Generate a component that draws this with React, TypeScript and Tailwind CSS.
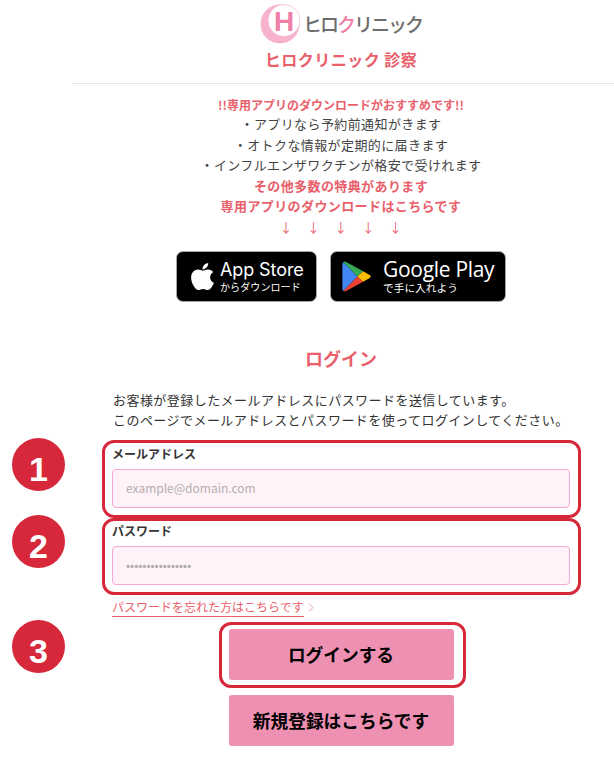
import { FaApple } from "react-icons/fa";

const font = { fontFamily: '"Noto Sans CJK JP", "Noto Sans", sans-serif' };

function Logo() {
  return (
    <div className="flex h-[47px] items-center justify-center">
      <svg width="40" height="40" viewBox="0 0 40 40">
        <circle cx="20" cy="20" r="19.5" fill="#f7b3cd" />
        <circle cx="24" cy="16.5" r="16" fill="#fff" stroke="#f7b3cd" strokeWidth="0.7" />
        <text x="24" y="27" textAnchor="middle" fontSize="28" fontWeight="700" fill="#ee7fa8" style={{ fontFamily: '"Liberation Sans", sans-serif' }}>H</text>
      </svg>
      <span className="ml-[3px] text-[19px] font-medium leading-none tracking-[-2px] text-[#6e6e6e]">
        ヒロ<span className="text-[#ef7fa8]">ク</span>リニック
      </span>
    </div>
  );
}

function GooglePlayIcon() {
  return (
    <svg width="30" height="33" viewBox="0 0 31 35">
      <path d="M1 2 L16 17.5 L1 33 Q0 32 0 30 L0 5 Q0 3 1 2Z" fill="#4285f4" />
      <path d="M1 2 Q2 1 4 2 L22 12 L16 17.5Z" fill="#34a853" />
      <path d="M1 33 Q2 34 4 33 L22 23 L16 17.5Z" fill="#ea4335" />
      <path d="M22 12 L29 16 Q31 17.5 29 19 L22 23 L16 17.5Z" fill="#fbbc04" />
    </svg>
  );
}

function Badges() {
  return (
    <div className="mt-[13px] flex justify-center gap-[13px]">
      <div className="flex h-[51px] w-[141px] items-center rounded-[7px] border border-[#a6a6a6] bg-black pl-[10px] text-white">
        <FaApple className="text-[31px]" />
        <div className="ml-[2px] flex flex-col">
          <span className="text-[18px] leading-[21px] tracking-[-0.1px]" style={{ fontFamily: '"Inter", sans-serif' }}>App Store</span>
          <span className="text-[10px] leading-[14px] tracking-[0.1px]">からダウンロード</span>
        </div>
      </div>
      <div className="flex h-[51px] w-[176px] items-center rounded-[7px] border border-[#a6a6a6] bg-black pl-[11px] text-white">
        <GooglePlayIcon />
        <div className="ml-[11px] flex flex-col">
          <span className="text-[21px] font-medium leading-[23px] tracking-[-0.3px]" style={{ fontFamily: '"Open Sans", sans-serif' }}>Google Play</span>
          <span className="text-[10.7px] leading-[14px]">で手に入れよう</span>
        </div>
      </div>
    </div>
  );
}

function Field({ label, placeholder }: { label: string; placeholder: string }) {
  return (
    <div className="flex flex-col">
      <label className="text-[12px] font-bold leading-[18px] text-[#333]">{label}</label>
      <div className="mt-[6px] flex h-[39px] items-center rounded-[4px] border border-[#f8a8d5] bg-[#fff3f8] pl-[13px] text-[12px] text-[#b3adb0]">
        {placeholder}
      </div>
    </div>
  );
}

function Marker({ n, top }: { n: number; top: string }) {
  return (
    <div className={`absolute left-[12px] ${top} flex h-[53px] w-[53px] items-center justify-center rounded-full bg-[#d7283b] pt-[8px] text-[34px] font-bold leading-none text-white`} style={{ fontFamily: '"Liberation Sans", sans-serif' }}>
      {n}
    </div>
  );
}

export default function App() {
  return (
    <div className="relative h-[762px] w-[614px] overflow-hidden bg-white" style={font}>
      <div className="ml-[72px] w-[538px]">
        <Logo />
        <h1 className="text-center text-[16px] font-bold leading-[24px] tracking-[0.5px] text-[#e9606b]">ヒロクリニック 診察</h1>
        <div className="mt-[12px] h-px w-[542px] bg-[#e5e5e5]" />
        <div className="mt-[12px] text-center text-[13px] leading-[20.6px] tracking-[0.4px] text-[#444]">
          <p className="text-[12px] font-bold leading-[18px] tracking-normal text-[#e9606b]">!!専用アプリのダウンロードがおすすめです!!</p>
          <p>・アプリなら予約前通知がきます</p>
          <p>・オトクな情報が定期的に届きます</p>
          <p>・インフルエンザワクチンが格安で受けれます</p>
          <p className="font-bold text-[#e9606b]">その他多数の特典があります</p>
          <p className="font-bold text-[#e9606b]">専用アプリのダウンロードはこちらです</p>
          <p className="flex justify-center gap-[14px] text-[#ec6470]">
            <span>↓</span><span>↓</span><span>↓</span><span>↓</span><span>↓</span>
          </p>
        </div>
        <Badges />
        <h2 className="mt-[44px] text-center text-[18px] font-bold leading-[24px] text-[#e9606b]">ログイン</h2>
        <div className="mt-[20px] pl-[41px] text-[13px] leading-[20px] tracking-[0.45px] text-[#333]">
          <p>お客様が登録したメールアドレスにパスワードを送信しています。</p>
          <p>このページでメールアドレスとパスワードを使ってログインしてください。</p>
        </div>
        <div className="mx-[40px] mt-[15px] flex flex-col gap-[14px]">
          <Field label="メールアドレス" placeholder="example@domain.com" />
          <Field label="パスワード" placeholder="••••••••••••••••" />
        </div>
        <div className="ml-[40px] mt-[13px] flex items-center text-[12px] leading-[18px] text-[#e9606b]">
          <span className="border-b border-[#e9606b]">パスワードを忘れた方はこちらです</span>
          <svg className="ml-[4px]" width="6" height="9" viewBox="0 0 6 9" fill="none" stroke="#e9a0a5" strokeWidth="1"><path d="M1 0.5 L5 4.5 L1 8.5" /></svg>
        </div>
        <div className="mt-[12px] flex flex-col items-center gap-[15px]">
          <button className="h-[51px] w-[225px] rounded-[3px] bg-[#ee90b2] text-[17.7px] font-bold text-black">ログインする</button>
          <button className="h-[51px] w-[225px] rounded-[3px] bg-[#ee90b2] text-[17.7px] font-bold text-black">新規登録はこちらです</button>
        </div>
      </div>

      <div className="absolute left-[102px] top-[440px] h-[78px] w-[479px] rounded-[12px] border-[3.5px] border-[#d7283b]" />
      <div className="absolute left-[102px] top-[518px] h-[77px] w-[479px] rounded-[12px] border-[3.5px] border-[#d7283b]" />
      <div className="absolute left-[219px] top-[622px] h-[66px] w-[247px] rounded-[12px] border-[3px] border-[#d7283b]" />
      <Marker n={1} top="top-[438px]" />
      <Marker n={2} top="top-[515px]" />
      <Marker n={3} top="top-[620px]" />
    </div>
  );
}
